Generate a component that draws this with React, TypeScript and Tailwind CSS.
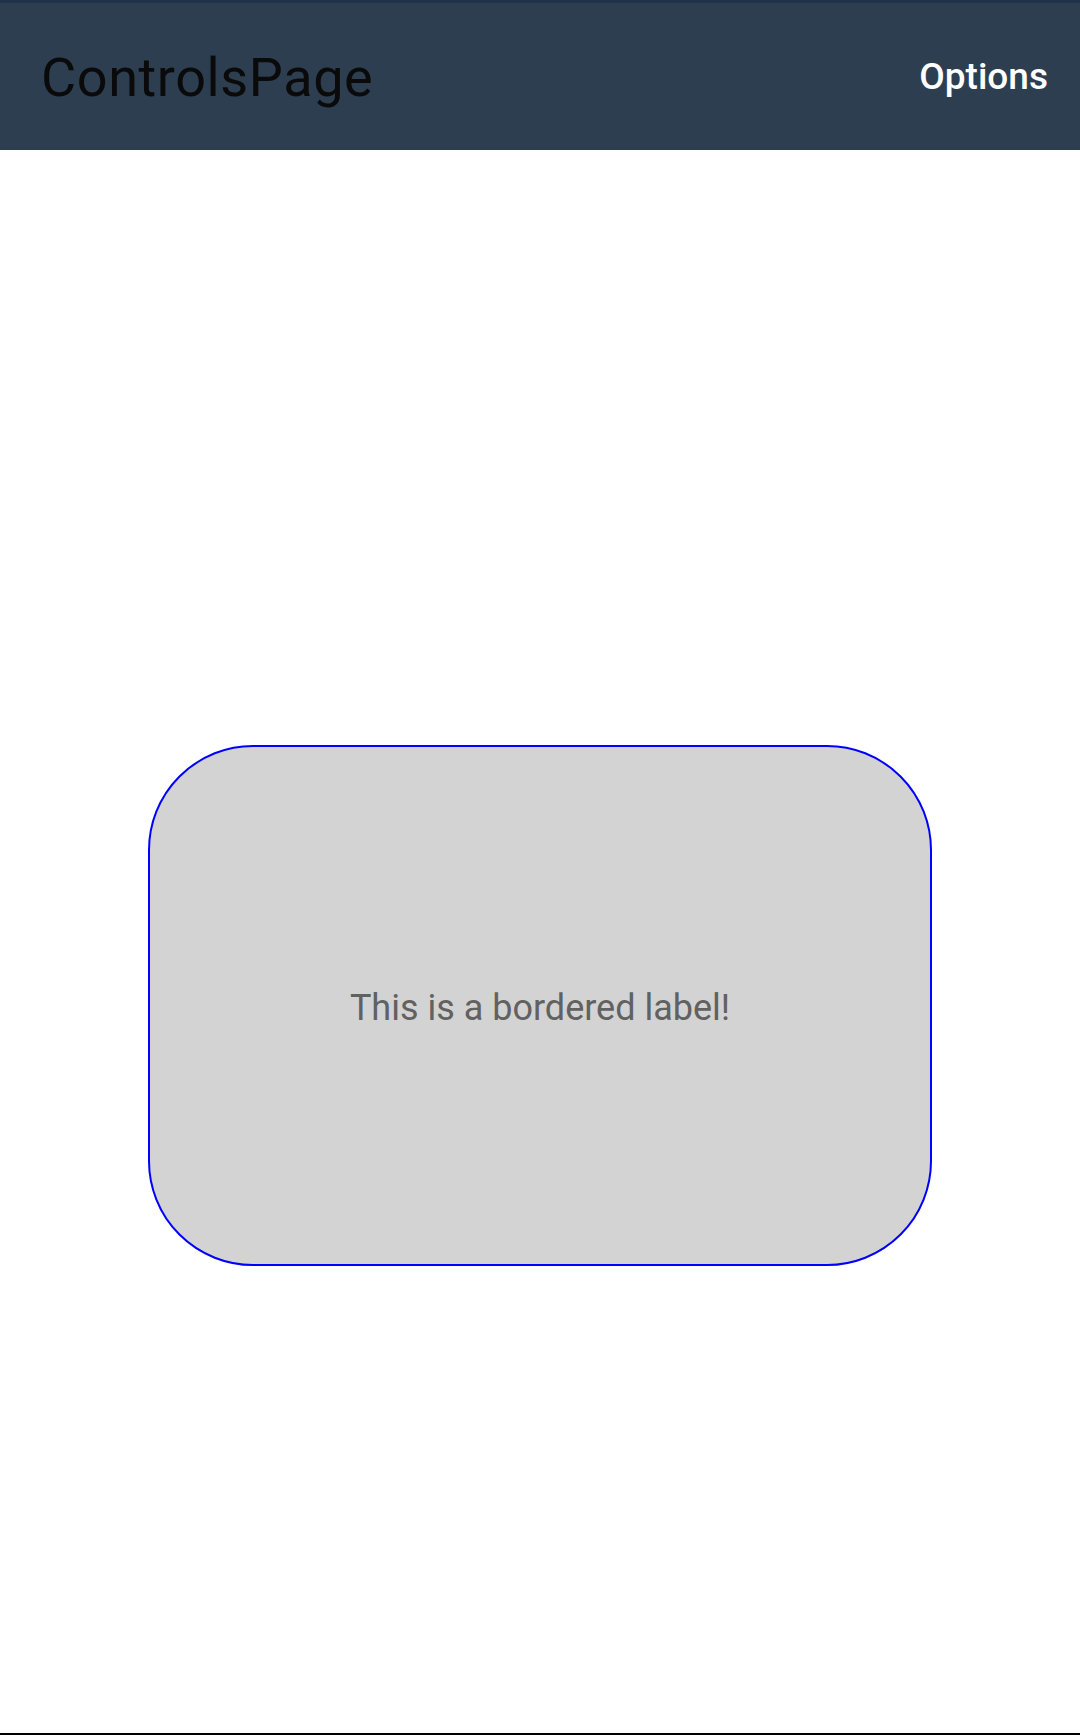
export default function App() {
  return (
    <div className="flex h-[1735px] flex-col bg-white font-['Roboto',sans-serif]">
      <header className="flex h-[150px] shrink-0 items-center justify-between border-t-[3px] border-[#1e3249] bg-[#2d3e50] pl-[41px] pr-[32px]">
        <h1 className="mt-[3px] text-[54px] leading-none font-normal tracking-[0.6px] text-[#0a0a0a]">ControlsPage</h1>
        <button className="text-[37px] leading-none font-medium text-white">Options</button>
      </header>

      <main className="flex flex-1 justify-center pt-[595px] border-b-2 border-black">
        <div className="flex h-[521px] w-[784px] items-center justify-center rounded-[105px] border-[2.5px] border-[#0000ff] bg-[#d3d3d3]">
          <span className="mt-[4px] text-[36px] leading-none text-[#616161]">This is a bordered label!</span>
        </div>
      </main>
    </div>
  )
}
